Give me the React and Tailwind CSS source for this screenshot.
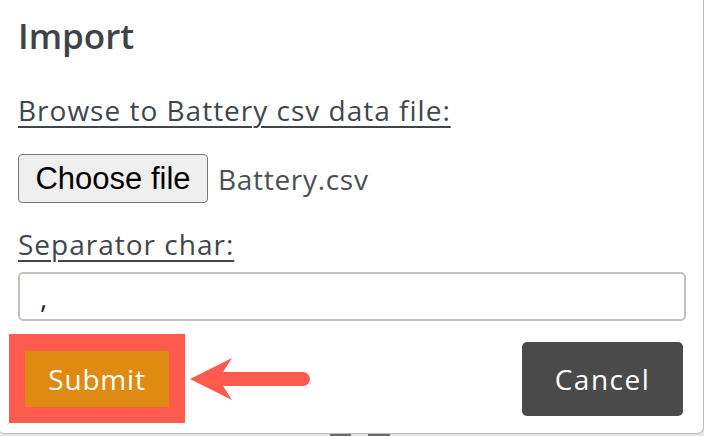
import React from 'react';

const sans = { fontFamily: '"Open Sans", Lato, sans-serif' };

export default function App() {
  return (
    <div className="w-[704px] h-[436px] bg-[#e6e6e6] relative overflow-hidden">
      <div
        className="relative w-[704px] h-[434px] bg-white border-r border-b border-[#b9b9b9] rounded-br-[7px] rounded-bl-[4px] pl-[18px] pr-[17px] pt-[14px] flex flex-col"
        style={sans}
      >
        <h2 className="text-[35px] leading-[44px] font-semibold text-[#3c4349]">Import</h2>

        <label className="mt-[35px] text-[28px] leading-[34px] tracking-[1px] text-[#3f464c] underline decoration-2 underline-offset-[5px] self-start">
          Browse to Battery csv data file:
        </label>

        <div className="mt-[27px] flex items-center gap-[10px]">
          <button
            className="h-[49px] w-[190px] bg-[#efefef] border border-[#767676] rounded-[4px] text-black text-[31px] leading-none"
            style={{ fontFamily: '"Liberation Sans", Arial, sans-serif' }}
          >
            Choose file
          </button>
          <span className="text-[28px] leading-[34px] tracking-[0.7px] text-[#4a4f55]">Battery.csv</span>
        </div>

        <label className="mt-[24px] text-[28px] leading-[34px] tracking-[1px] text-[#3f464c] underline decoration-2 underline-offset-[5px] self-start">
          Separator char:
        </label>

        <div className="mt-[11px] h-[49px] border-2 border-[#c4c1bd] rounded-[5px] flex items-center pl-[20px] text-[28px] text-[#222] w-[668px]">
          ,
        </div>

        <div className="mt-[13px] flex items-center justify-between pr-[3px]">
          <div className="ml-[-9px] bg-[#ff5a4e] pl-[16px] pr-[16px] pt-[17px] pb-[16px]">
            <button className="w-[144px] h-[56px] bg-[#df8a12] text-white text-[28px] tracking-[0.8px] leading-none">
              Submit
            </button>
          </div>
          <button className="w-[161px] h-[74px] bg-[#4a4a4a] rounded-[5px] text-white text-[28px] tracking-[1.5px] leading-none">
            Cancel
          </button>
        </div>

        <svg className="absolute left-[186px] top-[354px]" width="130" height="50" viewBox="0 0 130 50">
          <path
            d="M4 25 L46 4 L37 18 L117 18 A7 7 0 0 1 117 32 L37 32 L46 46 Z"
            fill="#ff5a4e"
          />
        </svg>
      </div>
      <div className="absolute left-[330px] top-[434px] w-[21px] h-[2px] bg-[#6b6b6b]" />
      <div className="absolute left-[368px] top-[434px] w-[22px] h-[2px] bg-[#6b6b6b]" />
    </div>
  );
}
